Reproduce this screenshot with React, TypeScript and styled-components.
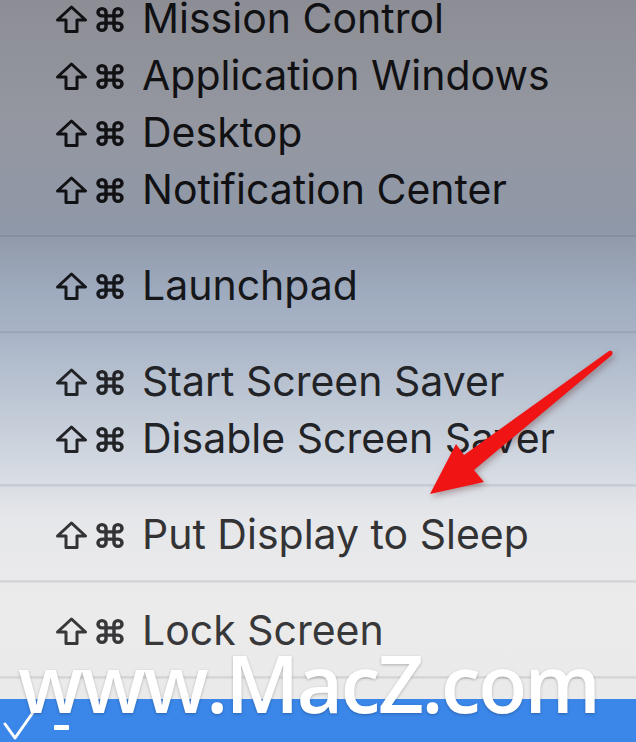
import React from 'react';
import styled, { createGlobalStyle } from 'styled-components';

const GlobalStyle = createGlobalStyle`
  html, body {
    margin: 0;
    padding: 0;
    overflow: hidden;
  }
`;

const Screen = styled.div`
  position: relative;
  width: 636px;
  height: 742px;
  overflow: hidden;
  display: flex;
  flex-direction: column;
  font-family: Inter, "Noto Sans", sans-serif;
  background: linear-gradient(
    180deg,
    #8d8e95 0px,
    #9497a0 120px,
    #8f98a8 230px,
    #9eaabd 290px,
    #aab6c8 340px,
    #c4ccd8 420px,
    #d8dde4 480px,
    #e6e7ea 520px,
    #ebebec 600px,
    #eaeaea 700px
  );
`;

const Menu = styled.div`
  display: flex;
  flex-direction: column;
  margin-top: -29px;
`;

const Group = styled.div`
  display: flex;
  flex-direction: column;
  padding: 18px 0;
`;

const Separator = styled.div`
  height: 2px;
  background: rgba(40, 50, 70, 0.1);
  border-bottom: 1px solid rgba(255, 255, 255, 0.12);
`;

const Row = styled.div<{ tone: string }>`
  height: 57px;
  display: flex;
  align-items: center;
  padding-left: 55px;
  color: ${({ tone }) => tone};
  font-size: 41px;
  line-height: 50px;
  white-space: nowrap;
`;

const Keys = styled.span`
  display: flex;
  align-items: center;
  gap: 6px;
  margin-right: 16px;
  margin-top: 3px;
`;

const Spacer = styled.div`
  height: 20px;
`;

const Highlight = styled.div`
  flex: 1;
  background: #3a86e9;
  position: relative;
`;

const Check = styled.svg`
  position: absolute;
  left: 2px;
  top: 11px;
`;

const Dash = styled.div`
  position: absolute;
  left: 54px;
  top: 26px;
  width: 15px;
  height: 5px;
  border-radius: 1px;
  background: #fff;
`;

const Arrow = styled.svg`
  position: absolute;
  left: 0;
  top: 0;
  filter: drop-shadow(2px 3px 3px rgba(60, 0, 0, 0.3));
`;

const Watermark = styled.div`
  position: absolute;
  left: 18px;
  top: 657px;
  font-family: "Open Sans", sans-serif;
  font-weight: 600;
  font-size: 80px;
  line-height: 50px;
  color: #fff;
  letter-spacing: -2.5px;
  text-shadow: 0 1px 3px rgba(0, 0, 0, 0.25);
`;

const ShiftIcon = () => (
  <svg width="33" height="28" viewBox="0 0 33 28" fill="none" stroke="currentColor" strokeWidth="3" strokeLinejoin="round">
    <path d="M11 26.5V15H2.5L16.5 2L30.5 15H22V26.5Z" />
  </svg>
);

const CmdIcon = () => (
  <svg width="32" height="29" viewBox="0 0 24 24" fill="none" stroke="currentColor" strokeWidth="2.6" strokeLinecap="round" strokeLinejoin="round" preserveAspectRatio="none">
    <path d="M15 6v12a3 3 0 1 0 3-3H6a3 3 0 1 0 3 3V6a3 3 0 1 0-3 3h12a3 3 0 1 0-3-3" />
  </svg>
);

const Item = ({ label, tone }: { label: string; tone: string }) => (
  <Row tone={tone}>
    <Keys>
      <ShiftIcon />
      <CmdIcon />
    </Keys>
    {label}
  </Row>
);

const groups = [
  { tone: '#111114', items: ['Mission Control', 'Application Windows', 'Desktop', 'Notification Center'] },
  { tone: '#16171b', items: ['Launchpad'] },
  { tone: '#222326', items: ['Start Screen Saver', 'Disable Screen Saver'] },
  { tone: '#333335', items: ['Put Display to Sleep'] },
  { tone: '#38383a', items: ['Lock Screen'] },
];

export default function App() {
  return (
    <Screen>
      <GlobalStyle />
      <Menu>
        {groups.map((g, i) => (
          <React.Fragment key={i}>
            <Group>
              {g.items.map((label) => (
                <Item key={label} label={label} tone={g.tone} />
              ))}
            </Group>
            <Separator />
          </React.Fragment>
        ))}
      </Menu>
      <Spacer />
      <Highlight>
        <Check width="34" height="32" viewBox="0 0 34 32" fill="none" stroke="#fff" strokeWidth="3" strokeLinecap="round" strokeLinejoin="round">
          <path d="M3 14L13 28L32 1" />
        </Check>
        <Dash />
      </Highlight>
      <Arrow width="636" height="742" viewBox="0 0 636 742">
        <path d="M430 494L456 444L464 455L609 351Q614 350 612 355L474 470L484 482Z" fill="#f01414" />
      </Arrow>
      <Watermark>www.MacZ.com</Watermark>
    </Screen>
  );
}
